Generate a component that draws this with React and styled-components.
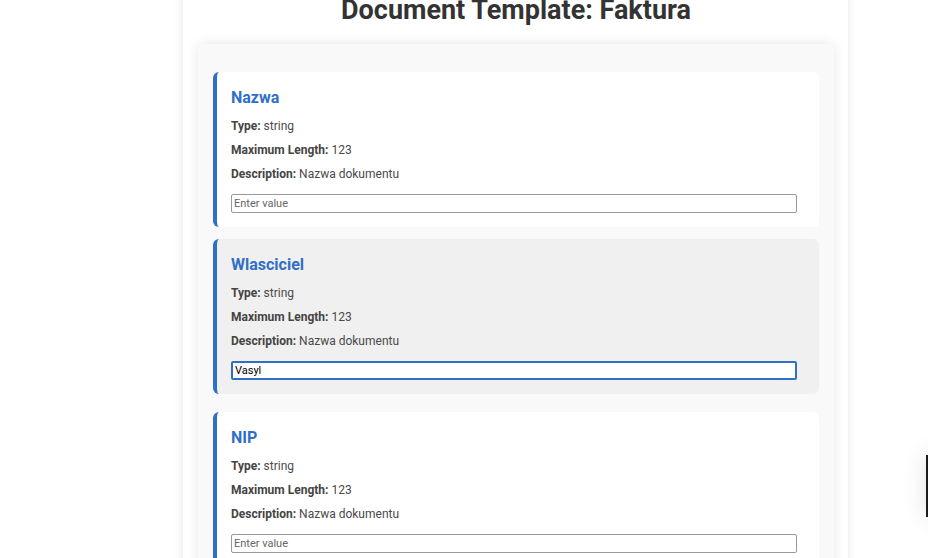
import React from 'react';
import styled, { createGlobalStyle } from 'styled-components';

const GlobalStyle = createGlobalStyle`
  html, body {
    margin: 0;
    padding: 0;
    background: #fff;
    font-family: Roboto, "Liberation Sans", Arial, sans-serif;
    overflow: hidden;
  }
`;

const Page = styled.div`
  display: flex;
  margin-top: -26px;
  padding-left: 183px;
`;

const Container = styled.main`
  width: 665px;
  box-sizing: border-box;
  background: #fff;
  padding: 20px 14px 0 15px;
  box-shadow: 0 0 10px rgba(0, 0, 0, 0.1);
  min-height: 620px;
`;

const Heading = styled.h1`
  margin: 0 0 18px;
  text-align: center;
  font-size: 27px;
  line-height: 32px;
  font-weight: 700;
  color: #333;
`;

const Panel = styled.section`
  background: #f9f9f9;
  padding: 28px 15px 15px;
  box-shadow: 0 0 12px rgba(0, 0, 0, 0.1);
  border-radius: 4px;
  display: flex;
  flex-direction: column;
  gap: 15px;
`;

const Card = styled.div`
  background: ${(p) => (p.$hover ? '#f0f0f0' : '#fff')};
  border-left: 4px solid #2f6fc7;
  border-radius: 6px;
  padding: 16px 15px 14px 14px;
  transform: ${(p) => (p.$hover ? 'translateY(-3px)' : 'none')};
`;

const FieldName = styled.h3`
  margin: 0 0 10px;
  font-size: 16px;
  line-height: 20px;
  font-weight: 700;
  color: #2f6fc7;
`;

const Info = styled.p`
  margin: 0 0 8px;
  font-size: 12px;
  line-height: 16px;
  color: #4a4a4a;

  strong {
    font-weight: 700;
    color: #444;
  }
`;

const ValueInput = styled.input`
  display: block;
  box-sizing: border-box;
  width: 566px;
  height: 19px;
  margin-top: 12px;
  padding: 0 2px;
  font-family: Roboto, "Liberation Sans", Arial, sans-serif;
  font-size: 11px;
  color: #000;
  background: #fff;
  border: ${(p) => (p.$focused ? '2px solid #2f6fc7' : '1px solid #999')};
  border-radius: 2px;
  outline: none;

  &::placeholder {
    color: #666;
  }
`;

const SideTab = styled.div`
  position: fixed;
  left: 926px;
  top: 455px;
  width: 80px;
  height: 62px;
  background: #fff;
  border-left: 2px solid #1a1a1a;
  box-shadow: 0 0 24px rgba(0, 0, 0, 0.12);
`;

const fields = [
  { name: 'Nazwa', value: '' },
  { name: 'Wlasciciel', value: 'Vasyl', hover: true, focused: true },
  { name: 'NIP', value: '' },
];

const FieldCard = ({ field }) => (
  <Card $hover={field.hover}>
    <FieldName>{field.name}</FieldName>
    <Info>
      <strong>Type:</strong> string
    </Info>
    <Info>
      <strong>Maximum Length:</strong> 123
    </Info>
    <Info>
      <strong>Description:</strong> Nazwa dokumentu
    </Info>
    <ValueInput
      placeholder="Enter value"
      defaultValue={field.value}
      $focused={field.focused}
    />
  </Card>
);

export default function App() {
  return (
    <>
      <GlobalStyle />
      <Page>
        <Container>
          <Heading>Document Template: Faktura</Heading>
          <Panel>
            {fields.map((f) => (
              <FieldCard key={f.name} field={f} />
            ))}
          </Panel>
        </Container>
      </Page>
      <SideTab />
    </>
  );
}
